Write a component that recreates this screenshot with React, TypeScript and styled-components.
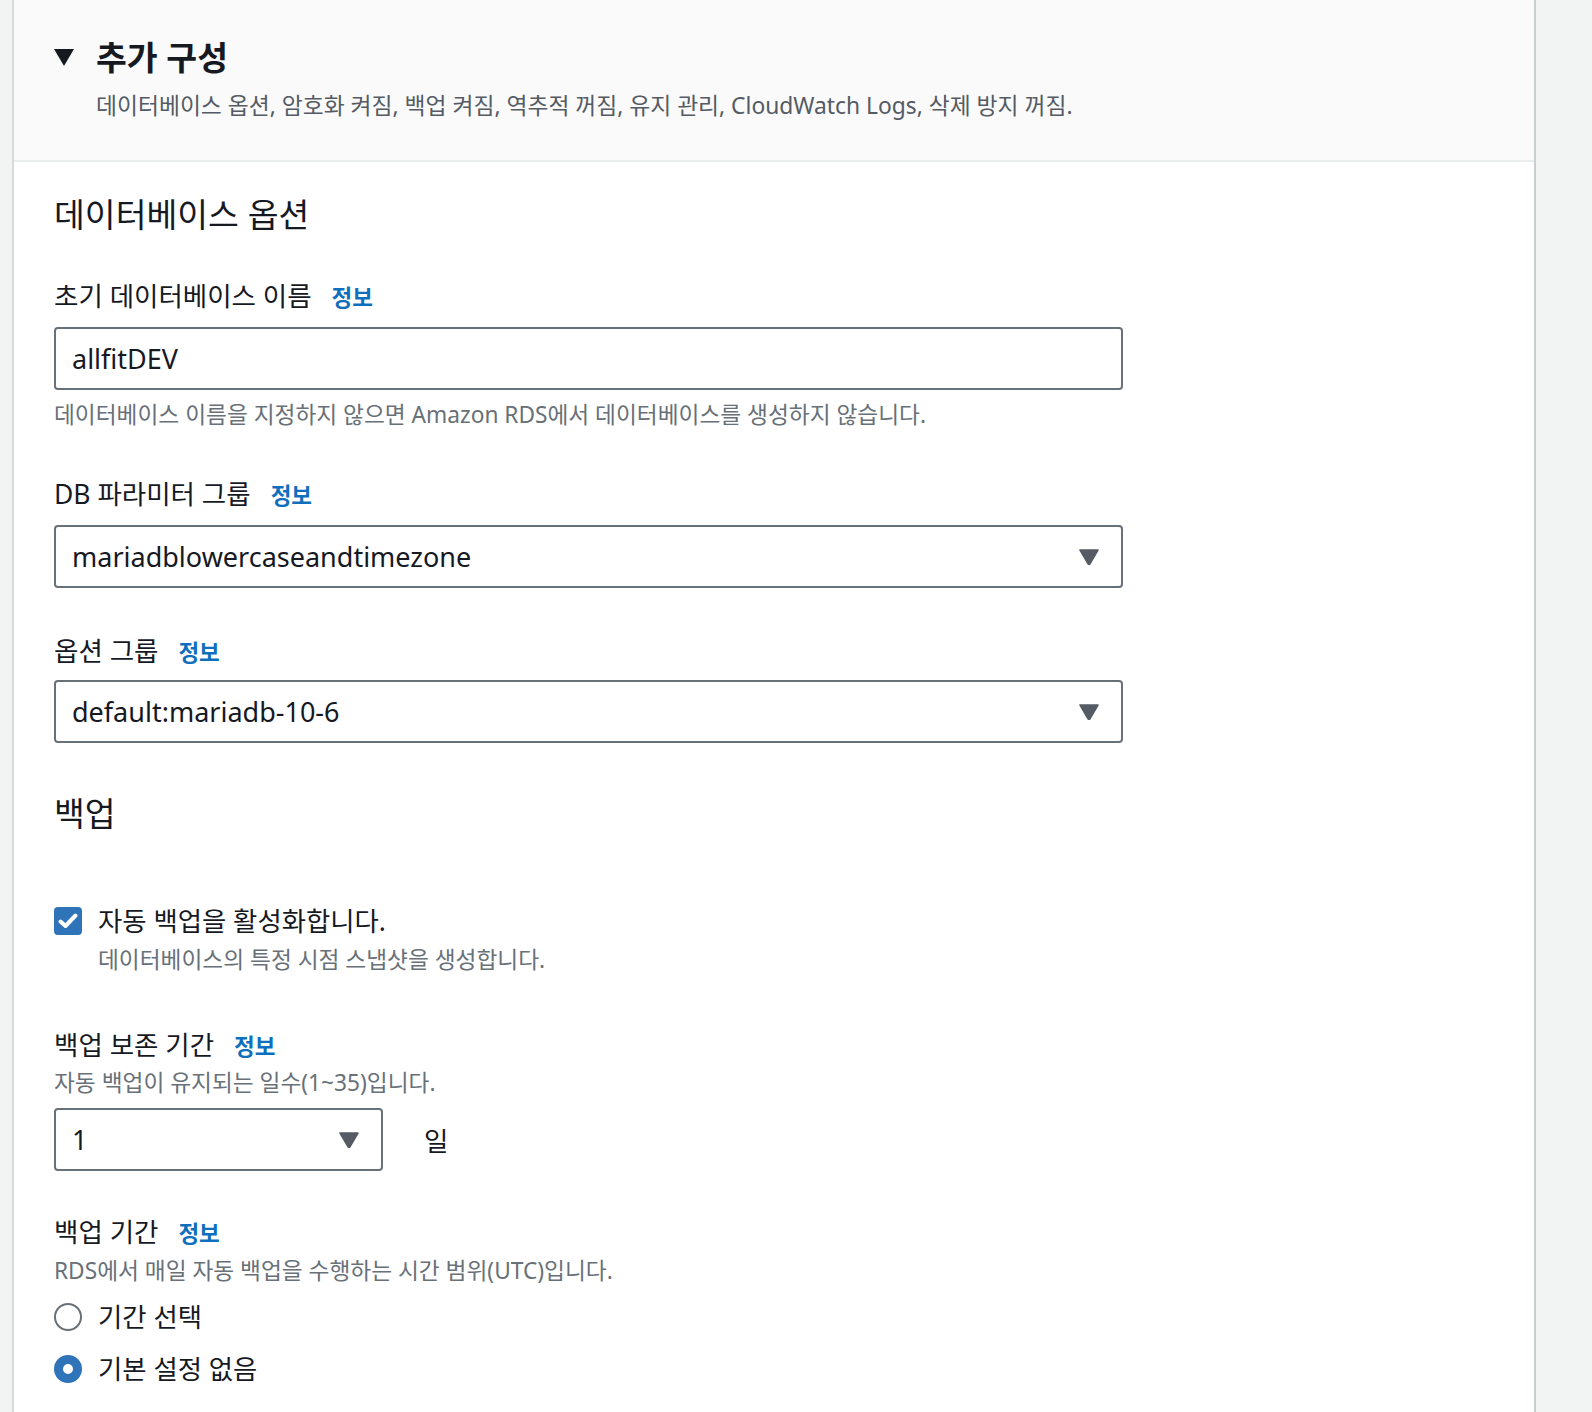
import React from 'react';
import styled, { createGlobalStyle } from 'styled-components';

const GlobalStyle = createGlobalStyle`
  html, body {
    margin: 0;
    padding: 0;
    background: #f2f3f3;
  }
  body {
    font-family: "Noto Sans", "Noto Sans CJK KR", sans-serif;
    color: #16191f;
  }
`;

const Page = styled.div`
  display: flex;
  min-height: 1412px;
  padding-left: 12px;
`;

const Panel = styled.div`
  width: 1520px;
  min-height: 1412px;
  background: #ffffff;
  border-left: 2px solid #d5dbdb;
  border-right: 2px solid #c9cfd1;
`;

const Header = styled.div`
  background: #fafafa;
  border-bottom: 2px solid #eaeded;
  padding: 37px 40px 39px 40px;
`;

const HeaderRow = styled.div`
  display: flex;
  align-items: center;
  gap: 22px;
`;

const Title = styled.h2`
  margin: 0;
  font-size: 33.5px;
  line-height: 40px;
  font-weight: 700;
  color: #16191f;
`;

const HeaderDescription = styled.div`
  margin: 14px 0 0 42px;
  font-size: 22.8px;
  line-height: 30px;
  color: #545b64;
`;

const Content = styled.div`
  padding: 32px 40px 40px 40px;
`;

const SectionTitle = styled.h3<{ $top?: number }>`
  margin: ${p => p.$top ?? 0}px 0 0 0;
  font-size: 33.5px;
  line-height: 40px;
  font-weight: 400;
  color: #16191f;
`;

const Field = styled.div<{ $top: number }>`
  margin-top: ${p => p.$top}px;
`;

const LabelRow = styled.div`
  display: flex;
  align-items: baseline;
  gap: 20px;
  font-size: 26.5px;
  line-height: 34px;
  color: #16191f;
`;

const InfoLink = styled.a`
  font-size: 22.5px;
  font-weight: 700;
  color: #0f6fbd;
  text-decoration: none;
  cursor: pointer;
`;

const Description = styled.div<{ $top?: number; $indent?: number }>`
  margin: ${p => p.$top ?? 0}px 0 0 ${p => p.$indent ?? 0}px;
  font-size: 22.7px;
  line-height: 30px;
  color: #687078;
`;

const TextInput = styled.input`
  display: block;
  box-sizing: border-box;
  width: 1069px;
  height: 63px;
  margin-top: 12px;
  padding: 0 16px;
  border: 2px solid #687078;
  border-radius: 4px;
  font-family: inherit;
  font-size: 27px;
  color: #16191f;
  background: #fff;
  outline: none;
`;

const SelectRow = styled.div<{ $top: number }>`
  display: flex;
  align-items: center;
  gap: 41px;
  margin-top: ${p => p.$top}px;
`;

const SelectBox = styled.div<{ $width: number; $top?: number }>`
  box-sizing: border-box;
  display: flex;
  align-items: center;
  justify-content: space-between;
  width: ${p => p.$width}px;
  height: 63px;
  margin-top: ${p => p.$top ?? 0}px;
  padding: 0 22px 0 16px;
  border: 2px solid #687078;
  border-radius: 4px;
  font-size: 27px;
  color: #16191f;
  background: #fff;
  cursor: pointer;
`;

const Unit = styled.span`
  font-size: 26.5px;
  color: #16191f;
`;

const OptionRow = styled.label<{ $top: number }>`
  display: flex;
  align-items: center;
  gap: 16px;
  margin-top: ${p => p.$top}px;
  font-size: 26.4px;
  line-height: 34px;
  color: #16191f;
  cursor: pointer;
`;

const CheckBox = styled.span`
  box-sizing: border-box;
  display: flex;
  align-items: center;
  justify-content: center;
  width: 28px;
  height: 28px;
  border-radius: 4px;
  background: #2f73b8;
`;

const Radio = styled.span<{ $checked?: boolean }>`
  box-sizing: border-box;
  width: 28px;
  height: 28px;
  border-radius: 50%;
  border: ${p => (p.$checked ? '9px solid #2f73b8' : '2.5px solid #687078')};
  background: #fff;
`;

const ExpandCaret = () => (
  <svg width="20" height="17" viewBox="0 0 20 17">
    <path d="M0 0 H20 L10 17 Z" fill="#16191f" />
  </svg>
);

const SelectCaret = () => (
  <svg width="20" height="16" viewBox="0 0 20 16">
    <path d="M1 1 H19 L10.8 15 Q10 16.2 9.2 15 Z" fill="#545b64" stroke="#545b64" strokeWidth="1.5" strokeLinejoin="round" />
  </svg>
);

const CheckMark = () => (
  <svg width="20" height="16" viewBox="0 0 20 16">
    <path d="M2.5 8.5 L7.5 13 L17.5 2.5" fill="none" stroke="#fff" strokeWidth="4" strokeLinecap="round" strokeLinejoin="round" />
  </svg>
);

const Label = ({ text }: { text: string }) => (
  <LabelRow>
    <span>{text}</span>
    <InfoLink>정보</InfoLink>
  </LabelRow>
);

const App = () => {
  return (
    <>
      <GlobalStyle />
      <Page>
        <Panel>
          <Header>
            <HeaderRow>
              <ExpandCaret />
              <Title>추가 구성</Title>
            </HeaderRow>
            <HeaderDescription>
              데이터베이스 옵션, 암호화 켜짐, 백업 켜짐, 역추적 꺼짐, 유지 관리, CloudWatch Logs, 삭제 방지 꺼짐.
            </HeaderDescription>
          </Header>
          <Content>
            <SectionTitle>데이터베이스 옵션</SectionTitle>

            <Field $top={45}>
              <Label text="초기 데이터베이스 이름" />
              <TextInput defaultValue="allfitDEV" />
              <Description $top={10}>
                데이터베이스 이름을 지정하지 않으면 Amazon RDS에서 데이터베이스를 생성하지 않습니다.
              </Description>
            </Field>

            <Field $top={47}>
              <Label text="DB 파라미터 그룹" />
              <SelectBox $width={1069} $top={12}>
                <span>mariadblowercaseandtimezone</span>
                <SelectCaret />
              </SelectBox>
            </Field>

            <Field $top={46}>
              <Label text="옵션 그룹" />
              <SelectBox $width={1069} $top={10}>
                <span>default:mariadb-10-6</span>
                <SelectCaret />
              </SelectBox>
            </Field>

            <SectionTitle $top={50}>백업</SectionTitle>

            <OptionRow $top={71}>
              <CheckBox>
                <CheckMark />
              </CheckBox>
              <span>자동 백업을 활성화합니다.</span>
            </OptionRow>
            <Description $top={7} $indent={44}>
              데이터베이스의 특정 시점 스냅샷을 생성합니다.
            </Description>

            <Field $top={53}>
              <Label text="백업 보존 기간" />
              <Description $top={4}>자동 백업이 유지되는 일수(1~35)입니다.</Description>
              <SelectRow $top={10}>
                <SelectBox $width={329}>
                  <span>1</span>
                  <SelectCaret />
                </SelectBox>
                <Unit>일</Unit>
              </SelectRow>
            </Field>

            <Field $top={44}>
              <Label text="백업 기간" />
              <Description $top={5}>RDS에서 매일 자동 백업을 수행하는 시간 범위(UTC)입니다.</Description>
              <OptionRow $top={14}>
                <Radio />
                <span>기간 선택</span>
              </OptionRow>
              <OptionRow $top={18}>
                <Radio $checked />
                <span>기본 설정 없음</span>
              </OptionRow>
            </Field>
          </Content>
        </Panel>
      </Page>
    </>
  );
};

export default App;
